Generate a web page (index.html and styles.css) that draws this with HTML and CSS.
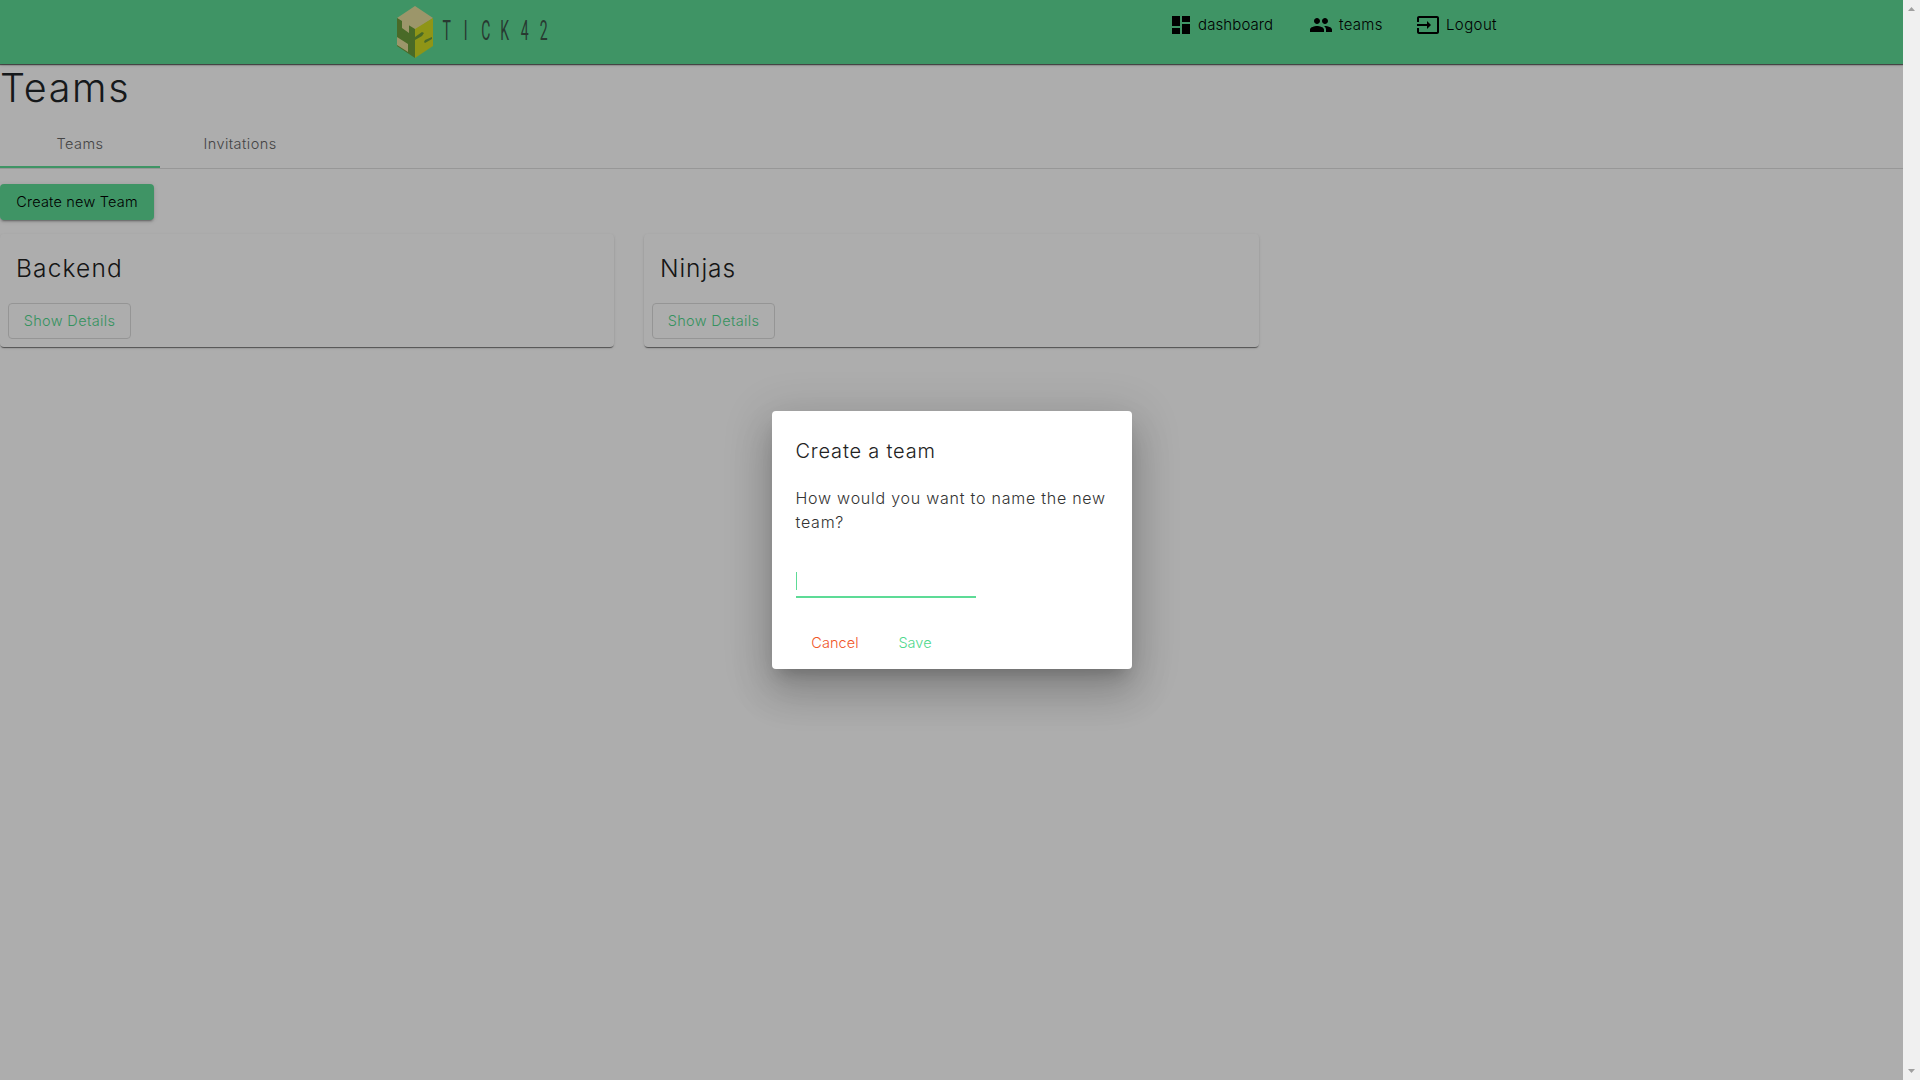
FILE: index.html
```html
<!DOCTYPE html>
<html lang="en">
<head>
<meta charset="utf-8">
<title>Teams</title>
<link rel="stylesheet" href="styles.css">
</head>
<body>
<div class="window">
  <div class="page">
    <header class="toolbar">
      <a class="brand">
        <svg class="brand-cube" viewBox="0 0 36 52" width="36" height="52">
          <path fill="#e6de9c" d="M18 0 36 12 18 24 0 12z"/>
          <path fill="#6c9c3a" d="M0 12 18 23V52L0 40z"/>
          <path fill="#d3dc22" d="M36 12 18 23V52L36 40z"/>
          <path fill="#e6de9c" d="M5 13 12 16V27L5 22zM0 31 11 38V46L0 39z"/>
          <path fill="#6c9c3a" d="M18 31 25 26 27 27 25 30 18 34zM27 36 28 34 35 31V33L28 37z"/>
        </svg>
        <span class="brand-name"><span>T</span><span>I</span><span>C</span><span>K</span><span>4</span><span>2</span></span>
      </a>
      <nav class="nav">
        <a class="nav-item"><svg class="icon" viewBox="0 0 24 24"><path d="M3 13h8V3H3v10zm0 8h8v-6H3v6zm10 0h8V11h-8v10zm0-18v6h8V3h-8z"/></svg><span class="t-dashboard">dashboard</span></a>
        <a class="nav-item nav-teams"><svg class="icon" viewBox="0 0 24 24"><path d="M16 11c1.66 0 2.99-1.34 2.99-3S17.660 5 16 5c-1.660 0-3 1.340-3 3s1.340 3 3 3zm-8 0c1.660 0 2.990-1.340 2.990-3S9.660 5 8 5C6.340 5 5 6.340 5 8s1.340 3 3 3zm0 2c-2.330 0-7 1.170-7 3.500V19h14v-2.500c0-2.330-4.670-3.500-7-3.500zm8 0c-.290 0-.620.020-.970.050 1.160.840 1.970 1.970 1.970 3.450V19h6v-2.500c0-2.330-4.670-3.500-7-3.500z"/></svg><span class="t-teams">teams</span></a>
        <a class="nav-item nav-logout"><svg class="icon" viewBox="0 0 24 24"><path d="M21 3.010H3c-1.100 0-2 .900-2 2V9h2V4.990h18v14.030H3V15H1v4.010c0 1.100.900 1.980 2 1.980h18c1.100 0 2-.880 2-1.980v-14c0-1.110-.900-2-2-2zM11 16l4-4-4-4v3H1v2h10v3z"/></svg><span class="t-logout">Logout</span></a>
      </nav>
    </header>
    <main>
      <h1 class="title">Teams</h1>
      <div class="tabs">
        <div class="tab tab-active"><span>Teams</span></div>
        <div class="tab"><span>Invitations</span></div>
      </div>
      <button class="btn btn-raised">Create new Team</button>
      <section class="cards">
        <article class="card"><h2 class="card-title">Backend</h2><button class="btn btn-stroked">Show Details</button></article>
        <article class="card"><h2 class="card-title card-ninjas">Ninjas</h2><button class="btn btn-stroked">Show Details</button></article>
      </section>
    </main>
    <div class="backdrop">
      <div class="dialog">
        <h3 class="dialog-title">Create a team</h3>
        <p class="dialog-text">How would you want to name the new team?</p>
        <div class="field"><span class="caret"></span></div>
        <div class="actions"><button class="btn cancel">Cancel</button><button class="btn save">Save</button></div>
      </div>
    </div>
  </div>
  <div class="scrollbar"><i class="arrow up"></i><i class="arrow down"></i></div>
</div>
</body>
</html>
```
FILE: styles.css
```css
* { box-sizing: border-box; }
body {
  margin: 0;
  overflow: hidden;
  font-family: Inter, "Open Sans", sans-serif;
  font-weight: 300;
  font-size: 14px;
  color: #000;
}
.window { display: flex; width: 1920px; height: 1080px; }
.page { position: relative; flex: 1; overflow: hidden; background: #fff; }
h1, h2, h3, p { margin: 0; font-weight: 300; white-space: nowrap; }

.toolbar {
  position: relative;
  display: flex;
  justify-content: space-between;
  height: 64px;
  padding: 0 406px 0 397px;
  background: #5ddb96;
  box-shadow: 0 1px 1px rgba(0, 0, 0, .55), 0 1px 3px rgba(0, 0, 0, .2);
}
.brand { display: flex; padding-top: 6px; }
.brand-name { display: flex; padding: 9px 0 0 4px; }
.brand-name span {
  width: 19.4px;
  display: flex;
  justify-content: center;
  font: 400 28px/32px Roboto, sans-serif;
  color: #3b5549;
  transform: scaleX(.5);
}
.nav { display: flex; align-items: flex-start; padding-top: 13px; }
.nav-item { display: flex; align-items: center; height: 24px; font-size: 15px; white-space: nowrap; }
.nav-item span { padding-bottom: 1px; }
.icon { width: 24px; height: 24px; flex: none; margin-right: 5px; }
.nav-teams { margin-left: 34px; }
.nav-teams .icon { margin-right: 6px; }
.nav-logout { margin-left: 31px; }
.nav-logout .icon { margin-right: 6px; }
.t-dashboard { width: 77px; letter-spacing: .1px; }
.t-teams { width: 46px; letter-spacing: .3px; }
.t-logout { width: 51px; letter-spacing: .4px; }

.title { height: 55px; padding-top: 1px; font-size: 39.5px; line-height: 46px; letter-spacing: 1.7px; color: #212529; }
.tabs { display: flex; height: 50px; border-bottom: 1px solid #dfdfdf; }
.tab {
  display: flex;
  align-items: center;
  justify-content: center;
  width: 160px;
  height: 49px;
  border-bottom: 2px solid transparent;
  padding-top: 2px;
  font-size: 14.5px;
  letter-spacing: .45px;
  color: #666;
}
.tab-active { border-bottom-color: #5ddb96; }

.btn {
  display: block;
  height: 36px;
  padding: 0 0 2px;
  border: 0;
  border-radius: 4px;
  background: none;
  font: inherit;
  font-size: 14.5px;
  white-space: nowrap;
}
.btn-raised {
  width: 154px;
  margin-top: 15px;
  background: #5ddb96;
  letter-spacing: .2px;
  box-shadow: 0 3px 1px -2px rgba(0,0,0,.2), 0 2px 2px rgba(0,0,0,.14), 0 1px 5px rgba(0,0,0,.12);
}
.cards { display: flex; gap: 30px; margin-top: 14px; }
.card {
  width: 614px;
  height: 113px;
  padding: 16px 8px 8px;
  border-radius: 4px;
  box-shadow: 0 2px 1px -1px rgba(0,0,0,.4), 0 1px 1px rgba(0,0,0,.14), 0 1px 3px rgba(0,0,0,.12);
}
.card + .card { width: 615px; }
.card-title { height: 53px; padding-left: 8px; font-size: 24.5px; line-height: 37px; letter-spacing: 1.15px; color: #212121; }
.card-ninjas { letter-spacing: .9px; }
.btn-stroked { width: 123px; border: 1px solid #dcdcdc; letter-spacing: .36px; color: #50d88d; }

.backdrop {
  position: absolute;
  inset: 0;
  display: flex;
  align-items: center;
  justify-content: center;
  background: rgba(0, 0, 0, .32);
}
.dialog {
  width: 360px;
  height: 258px;
  padding: 24px;
  border-radius: 4px;
  background: #fff;
  box-shadow: 0 11px 15px -7px rgba(0,0,0,.2), 0 24px 38px 3px rgba(0,0,0,.14), 0 9px 46px 8px rgba(0,0,0,.12);
}
.dialog-title { height: 51px; font-size: 20px; line-height: 32px; letter-spacing: .8px; color: #222; }
.dialog-text { width: 330px; font-size: 16px; line-height: 24px; letter-spacing: .76px; color: #333; white-space: normal; }
.field { width: 180px; height: 30px; margin-top: 34px; padding-top: 4px; border-bottom: 2px solid #5ddb96; }
.caret { display: block; width: 1px; height: 18px; background: #5ddb96; }
.actions { display: flex; margin-top: 27px; }
.cancel { width: 79px; letter-spacing: .1px; color: #f05528; }
.save { width: 65px; margin-left: 8px; color: #50d88d; }

.scrollbar { display: flex; flex-direction: column; justify-content: space-between; align-items: center; width: 17px; padding: 7px 0; background: #f0f0f0; }
.arrow { width: 7px; height: 4px; background: #a0a0a0; }
.up { clip-path: polygon(50% 0, 100% 100%, 0 100%); }
.down { clip-path: polygon(0 0, 100% 0, 50% 100%); }
```
